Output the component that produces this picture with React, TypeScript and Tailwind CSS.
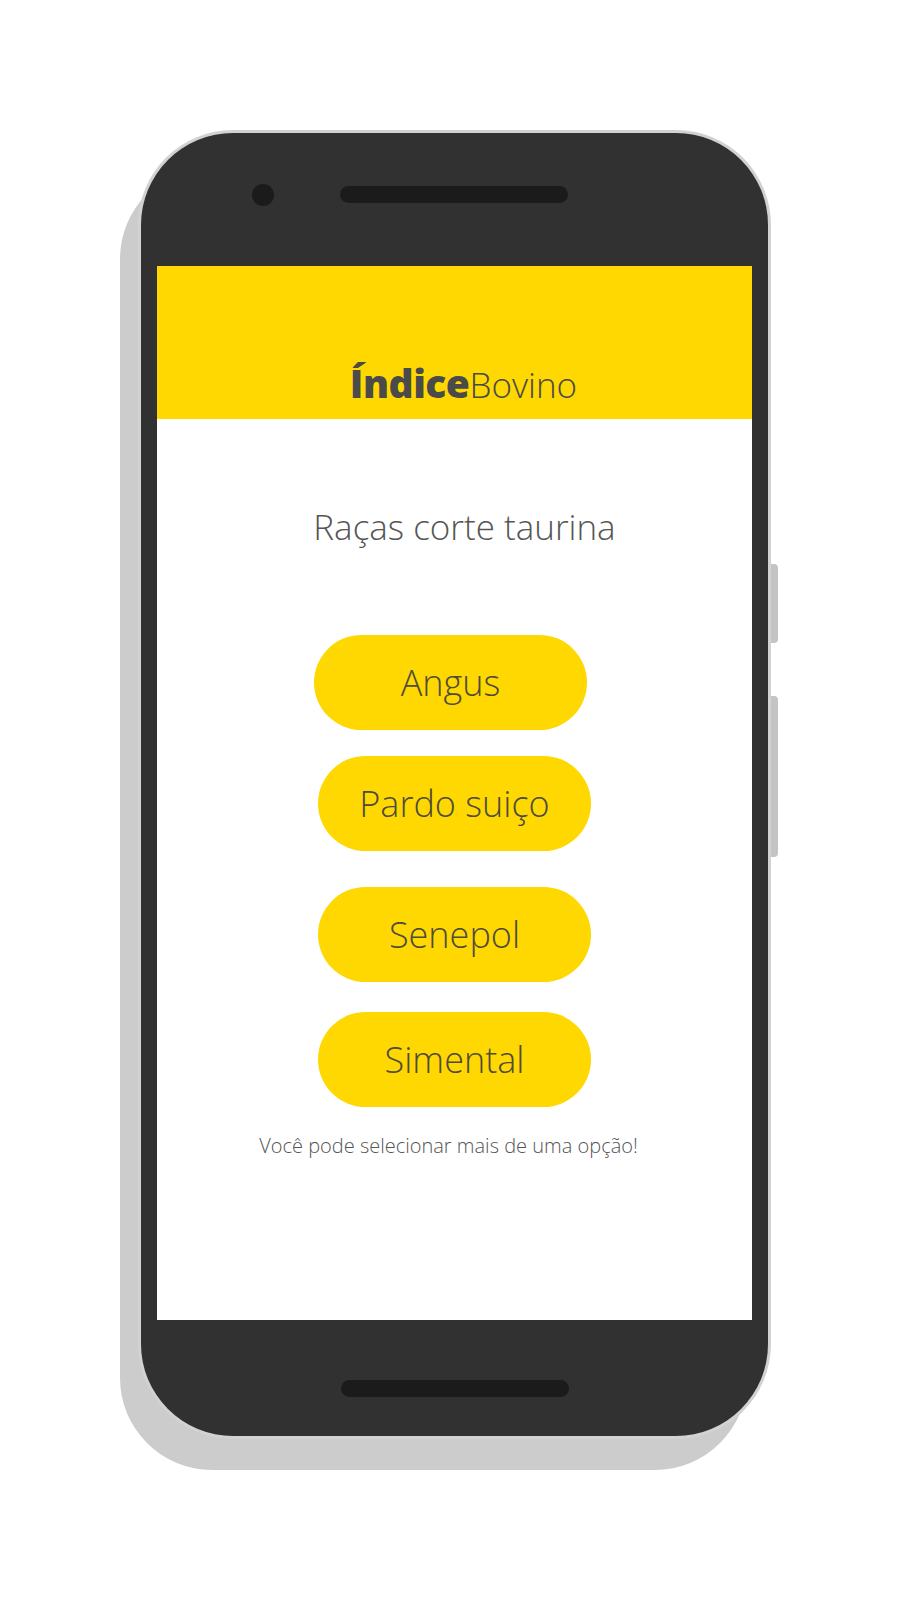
import React from 'react';

const breeds = [
  { name: 'Angus', className: 'mt-[86px] -translate-x-[4px]' },
  { name: 'Pardo suiço', className: 'mt-[26px]' },
  { name: 'Senepol', className: 'mt-[36px]' },
  { name: 'Simental', className: 'mt-[30px]' },
];

function BreedButton({ name, className }: { name: string; className: string }) {
  return (
    <button
      className={`${className} flex h-[95px] w-[273px] items-center justify-center rounded-full bg-[#fed800] text-[36px] font-light text-[#4f4a3c]`}
    >
      {name}
    </button>
  );
}

export default function App() {
  return (
    <div
      className="h-[1600px] w-[900px] bg-white pt-[133px]"
      style={{ fontFamily: '"Open Sans", "Liberation Sans", sans-serif' }}
    >
      <div className="relative ml-[141px] w-[627px]">
        {/* Drop shadow of the phone body */}
        <div className="absolute left-[-21px] top-[34px] h-[1303px] w-[627px] rounded-[92px] bg-[#cccccc]" />

        {/* Side buttons */}
        <div className="absolute left-[630px] top-[431px] h-[79px] w-[7px] rounded-r-sm bg-[#c4c4c4]" />
        <div className="absolute left-[630px] top-[563px] h-[161px] w-[7px] rounded-r-sm bg-[#c4c4c4]" />

        {/* Phone body */}
        <div className="relative flex h-[1303px] w-[627px] flex-col rounded-[92px] bg-[#313131] ring-[3px] ring-[#d2d2d2]">
          {/* Top bezel */}
          <div className="flex h-[133px] items-start pt-[51px]">
            <div className="ml-[111px] h-[22px] w-[22px] rounded-full bg-[#1b1b1b]" />
            <div className="ml-[66px] mt-[2px] h-[17px] w-[228px] rounded-full bg-[#1b1b1b]" />
          </div>

          {/* Screen */}
          <div className="mx-[16px] flex flex-col">
            <div className="flex h-[153px] items-baseline justify-center bg-[#fed800] pl-[18px] pt-[97px] leading-none text-[#4a4a4a]">
              <span className="text-[39px] font-extrabold tracking-[-0.5px]">Índice</span>
              <span className="text-[35px] font-light">Bovino</span>
            </div>
            <div className="flex h-[901px] flex-col items-center bg-white">
              <h1 className="mt-[86px] translate-x-[10px] text-[35px] font-light leading-[44px] text-[#555555]">
                Raças corte taurina
              </h1>
              {breeds.map((b) => (
                <BreedButton key={b.name} name={b.name} className={b.className} />
              ))}
              <p className="mt-[24px] -translate-x-[6px] text-[20px] font-light text-[#555555]">
                Você pode selecionar mais de uma opção!
              </p>
            </div>
          </div>

          {/* Bottom bezel */}
          <div className="flex flex-1 justify-center pt-[60px]">
            <div className="h-[17px] w-[228px] rounded-full bg-[#1b1b1b]" />
          </div>
        </div>
      </div>
    </div>
  );
}
